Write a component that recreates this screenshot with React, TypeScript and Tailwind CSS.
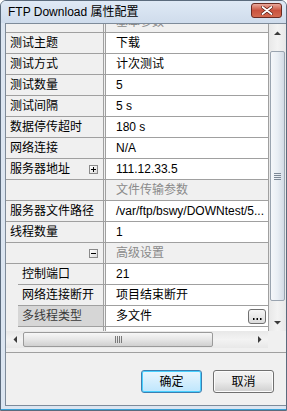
import React from "react";

type Row =
  | { kind: "cat"; label: string; exp?: "+" | "-" }
  | { kind: "prop"; label: string; value: string; exp?: "+" | "-"; sub?: boolean; selected?: boolean; btn?: boolean };

const rows: Row[] = [
  { kind: "cat", label: "基本参数" },
  { kind: "prop", label: "测试主题", value: "下载" },
  { kind: "prop", label: "测试方式", value: "计次测试" },
  { kind: "prop", label: "测试数量", value: "5" },
  { kind: "prop", label: "测试间隔", value: "5 s" },
  { kind: "prop", label: "数据停传超时", value: "180 s" },
  { kind: "prop", label: "网络连接", value: "N/A" },
  { kind: "prop", label: "服务器地址", value: "111.12.33.5", exp: "+" },
  { kind: "cat", label: "文件传输参数" },
  { kind: "prop", label: "服务器文件路径", value: "/var/ftp/bswy/DOWNtest/5..." },
  { kind: "prop", label: "线程数量", value: "1" },
  { kind: "cat", label: "高级设置", exp: "-" },
  { kind: "prop", label: "控制端口", value: "21", sub: true },
  { kind: "prop", label: "网络连接断开", value: "项目结束断开", sub: true },
  { kind: "prop", label: "多线程类型", value: "多文件", sub: true, selected: true, btn: true },
  { kind: "prop", label: "", value: "", sub: true },
];

function ExpBox({ sign }: { sign: "+" | "-" }) {
  return (
    <div className="w-[9px] h-[9px] border border-[#8a8a8a] bg-gradient-to-br from-white to-[#dcdcdc] flex items-center justify-center mr-[5px] shrink-0">
      <svg width="7" height="7" viewBox="0 0 7 7">
        <rect x="1" y="3" width="5" height="1" fill="#000" />
        {sign === "+" && <rect x="3" y="1" width="1" height="5" fill="#000" />}
      </svg>
    </div>
  );
}

function GridRow({ r }: { r: Row }) {
  if (r.kind === "cat") {
    return (
      <div className="h-[21px] flex shrink-0 border-b border-[#a0a0a0] bg-[#f0f0f0]">
        <div className="w-[98px] flex items-center justify-end border-r border-[#a0a0a0]">
          {r.exp && <ExpBox sign={r.exp} />}
        </div>
        <div className="w-[1px]" />
        <div className="flex-1 border-l border-[#a0a0a0] pl-[10px] flex items-center text-[#8a8a8a] whitespace-nowrap">
          {r.label}
        </div>
      </div>
    );
  }
  return (
    <div className="h-[21px] flex shrink-0">
      {r.sub && <div className="w-[12px] bg-[#f0f0f0] shrink-0" />}
      <div
        className={`${r.sub ? "w-[86px]" : "w-[98px]"} flex items-center border-r border-b border-[#a0a0a0] pl-[4px] whitespace-nowrap shrink-0 ${
          r.selected ? "bg-[#d6d6d6] text-[#3a3a3a]" : "bg-[#f0f0f0] text-black"
        }`}
      >
        <span className="flex-1">{r.label}</span>
        {r.exp && <ExpBox sign={r.exp} />}
      </div>
      <div className="w-[1px] bg-[#f0f0f0] border-b border-[#a0a0a0]" />
      <div className="flex-1 bg-white border-l border-b border-[#a0a0a0] pl-[10px] pr-[2px] flex items-center whitespace-nowrap overflow-hidden">
        <span className="flex-1">{r.value}</span>
        {r.btn && (
          <div className="w-[18px] h-[15px] rounded-[3px] border border-[#707070] bg-gradient-to-b from-[#f6f6f6] to-[#dcdcdc] flex items-end justify-center pb-[3px] shrink-0">
            <svg width="9" height="2" viewBox="0 0 9 2">
              <rect x="0" y="0" width="1.5" height="2" fill="#000" />
              <rect x="3.5" y="0" width="1.5" height="2" fill="#000" />
              <rect x="7" y="0" width="1.5" height="2" fill="#000" />
            </svg>
          </div>
        )}
      </div>
    </div>
  );
}

function Arrow({ dir }: { dir: "up" | "down" | "left" | "right" }) {
  const pts: Record<string, string> = {
    up: "0,4 3.5,0.5 7,4",
    down: "0,0 3.5,3.5 7,0",
    left: "4,0 0.5,3.5 4,7",
    right: "0,0 3.5,3.5 0,7",
  };
  const vert = dir === "up" || dir === "down";
  return (
    <svg width={vert ? 7 : 4} height={vert ? 4 : 7} viewBox={vert ? "0 0 7 4" : "0 0 4 7"}>
      <polygon points={pts[dir]} fill="#3c3c3c" />
    </svg>
  );
}

export default function App() {
  return (
    <div
      className="w-[287px] h-[411px] bg-[#dbe5f1] border border-[#5b6b7d] rounded-t-[6px] flex flex-col overflow-hidden text-[12px] leading-none"
      style={{ fontFamily: '"Liberation Sans", "Noto Sans CJK SC", sans-serif' }}
    >
      {/* Title bar */}
      <div className="h-[22px] flex items-center pl-[7px] pr-[4px] bg-gradient-to-b from-[#dfe9f5] to-[#cfdcec] shrink-0">
        <span className="text-[12px] text-black whitespace-nowrap">FTP Download 属性配置</span>
        <div className="ml-auto mt-[-3px] w-[31px] h-[15px] rounded-[3px] border border-[#6a2b22] bg-gradient-to-b from-[#e9a89b] via-[#c9523e] to-[#d46a50] flex items-center justify-center">
          <svg width="12" height="9" viewBox="0 0 12 9">
            <path d="M1.5 1 L10.5 8 M10.5 1 L1.5 8" stroke="#5a1d14" strokeWidth="3.2" strokeLinecap="round" />
            <path d="M1.5 1 L10.5 8 M10.5 1 L1.5 8" stroke="#ffffff" strokeWidth="1.8" strokeLinecap="round" />
          </svg>
        </div>
      </div>

      {/* Body */}
      <div className="flex-1 ml-[4px] mb-[3px] border-t border-l border-b border-[#7e8b9a] bg-[#f0f0f0] flex flex-col">
        {/* Grid + vscroll */}
        <div className="h-[307px] flex shrink-0">
          <div className="flex-1 overflow-hidden bg-[#f0f0f0]">
            <div className="-mt-[12px] flex flex-col">
              {rows.map((r, i) => (
                <GridRow key={i} r={r} />
              ))}
            </div>
          </div>
          <div className="w-[1px] bg-[#a0a0a0]" />
          {/* vertical scrollbar */}
          <div className="w-[17px] flex flex-col bg-gradient-to-r from-[#e8e8e8] via-[#f3f3f3] to-[#e8e8e8]">
            <div className="h-[17px] flex items-center justify-center">
              <Arrow dir="up" />
            </div>
            <div className="flex-1 flex flex-col pt-[10px] pb-[13px]">
              <div className="flex-1 mx-[1px] rounded-[2px] border border-[#9aa4b0] bg-gradient-to-r from-[#f5f7fa] via-[#e9eef4] to-[#d3dbe5] flex items-center justify-center">
                <svg width="7" height="7" viewBox="0 0 7 7">
                  <rect x="0" y="0" width="7" height="1" fill="#7d8896" />
                  <rect x="0" y="2" width="7" height="1" fill="#7d8896" />
                  <rect x="0" y="4" width="7" height="1" fill="#7d8896" />
                  <rect x="0" y="6" width="7" height="1" fill="#7d8896" />
                </svg>
              </div>
            </div>
            <div className="h-[17px] flex items-center justify-center">
              <Arrow dir="down" />
            </div>
          </div>
        </div>

        {/* hscroll */}
        <div className="h-[17px] flex shrink-0">
          <div className="flex-1 flex bg-gradient-to-b from-[#e8e8e8] via-[#f3f3f3] to-[#e8e8e8]">
            <div className="w-[17px] flex items-center justify-center">
              <Arrow dir="left" />
            </div>
            <div className="flex-1 flex pr-[38px] py-[1px]">
              <div className="flex-1 rounded-[2px] border border-[#9a9a9a] bg-gradient-to-b from-[#f7f7f7] via-[#e6e6e6] to-[#d0d0d0] flex items-center justify-center">
                <svg width="7" height="7" viewBox="0 0 7 7">
                  <rect x="0" y="0" width="1" height="7" fill="#7a7a7a" />
                  <rect x="2" y="0" width="1" height="7" fill="#7a7a7a" />
                  <rect x="4" y="0" width="1" height="7" fill="#7a7a7a" />
                  <rect x="6" y="0" width="1" height="7" fill="#7a7a7a" />
                </svg>
              </div>
            </div>
            <div className="w-[17px] flex items-center justify-center">
              <Arrow dir="right" />
            </div>
          </div>
          <div className="w-[18px] bg-[#f0f0f0]" />
        </div>

        {/* separator */}
        <div className="mt-[4px] h-[2px] border-t border-[#a0a0a0] bg-[#f0f0f0] shrink-0" />

        {/* buttons */}
        <div className="flex justify-end gap-[11px] pr-[12px] mt-[16px]">
          <div className="w-[61px] h-[23px] rounded-[3px] border border-[#3c7fb1] bg-gradient-to-b from-[#eaf6fd] to-[#bee6fd] flex items-center justify-center shadow-[inset_0_0_0_1px_#48d0ff] text-black">
            确定
          </div>
          <div className="w-[61px] h-[23px] rounded-[3px] border border-[#707070] bg-gradient-to-b from-[#f2f2f2] via-[#ebebeb] to-[#cfcfcf] flex items-center justify-center shadow-[inset_0_0_0_1px_#fcfcfc] text-black">
            取消
          </div>
        </div>
      </div>
      <div className="h-[1px] bg-[#39a0d6] shrink-0" />
    </div>
  );
}
